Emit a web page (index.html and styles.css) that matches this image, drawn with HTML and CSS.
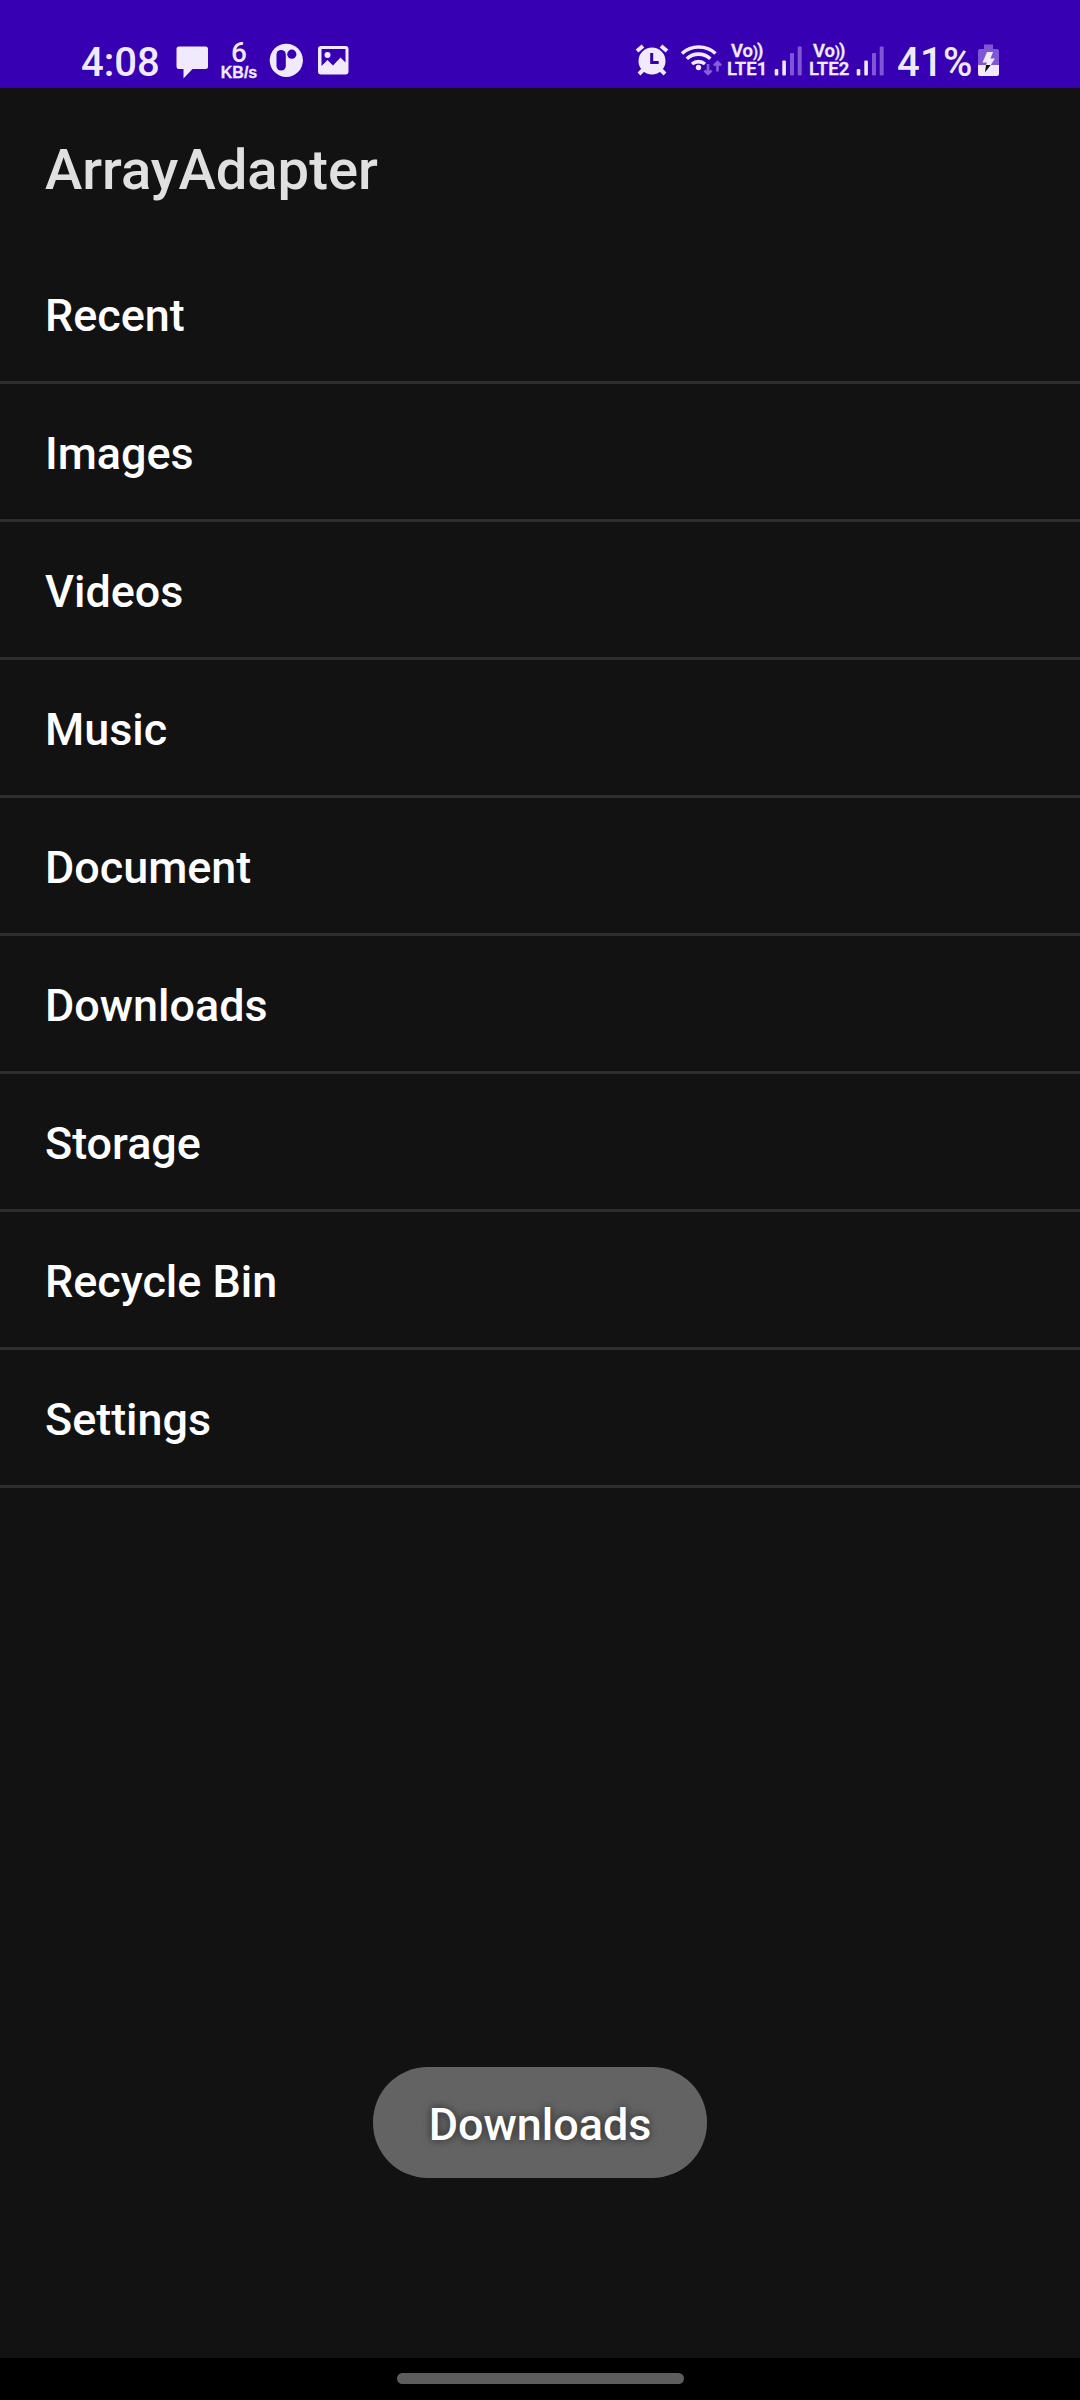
FILE: index.html
```html
<!DOCTYPE html>
<html lang="en">
<head>
<meta charset="utf-8">
<title>ArrayAdapter</title>
<link rel="stylesheet" href="styles.css">
</head>
<body>
<div class="screen">
  <header class="status">
    <div class="status-side">
      <span class="clock">4:08</span>
      <svg class="icon" width="46" height="88" viewBox="170 0 46 88"><path d="M179 46.500h26.500a2.500 2.500 0 0 1 2.500 2.500v17.500a2.500 2.500 0 0 1-2.500 2.500H192.500L183.500 78.500V69H179a2.500 2.500 0 0 1-2.500-2.500V49a2.500 2.500 0 0 1 2.500-2.500z"/></svg>
      <div class="speed"><span class="speed-value">6</span><span class="speed-unit">KB/s</span></div>
      <svg class="icon" width="100" height="88" viewBox="262 0 100 88">
        <circle cx="286.300" cy="60.300" r="16.600"/>
        <rect class="cut" x="276.500" y="50" width="9.300" height="20.500" rx="4.600"/>
        <circle class="cut" cx="291.800" cy="54.200" r="4.600"/>
        <path fill-rule="evenodd" d="M321 46h24.500a3 3 0 0 1 3 3v22.500a3 3 0 0 1-3 3H321a3 3 0 0 1-3-3V49a3 3 0 0 1 3-3zM321.500 49v17l6-6 5.500 5.500 7.500-8 5 5V49z"/>
        <circle cx="327.500" cy="55" r="3"/>
      </svg>
    </div>
    <div class="status-side">
      <svg class="icon" width="96" height="88" viewBox="630 0 96 88">
        <circle cx="652" cy="61" r="13.500"/>
        <path class="line" stroke-width="4" d="M637 51l6-5M661 46l6 5M643 70l-4 4M661 70l4 4"/>
        <path class="cut-line" stroke-width="3" d="M651.700 53v9.500h7"/>
        <path class="line" stroke-width="3.600" d="M682 53.500a25 25 0 0 1 33.500 0M686.800 58.800a17 17 0 0 1 23.500 0M692 64a10 10 0 0 1 13 0"/>
        <circle cx="698.500" cy="67.500" r="2.700"/>
        <path class="line dim" stroke-width="2.600" d="M708 64v9.500M704.500 70.500l3.500 3.500 3.500-3.500M717.500 71.500V62.500M714 65.500l3.500-3.500 3.500 3.500"/>
      </svg>
      <div class="network"><span class="volte">Vo<b>)</b><b class="wide">)</b></span><span>LTE1</span></div>
      <svg class="icon bars" width="30" height="88" viewBox="773 0 30 88"><rect x="774.700" y="69" width="3.600" height="6.500" rx="1"/><rect x="782.300" y="60.500" width="3.600" height="15" rx="1"/><rect class="faint" x="790" y="53" width="4" height="22.500" rx="1"/><rect class="faint" x="797.700" y="46.500" width="4" height="29" rx="1"/></svg>
      <div class="network second"><span class="volte">Vo<b>)</b><b class="wide">)</b></span><span>LTE2</span></div>
      <svg class="icon bars" width="30" height="88" viewBox="773 0 30 88"><rect x="774.700" y="69" width="3.600" height="6.500" rx="1"/><rect x="782.300" y="60.500" width="3.600" height="15" rx="1"/><rect class="faint" x="790" y="53" width="4" height="22.500" rx="1"/><rect class="faint" x="797.700" y="46.500" width="4" height="29" rx="1"/></svg>
      <span class="percent">41%</span>
      <svg class="icon" width="24" height="88" viewBox="976 0 24 88">
        <path class="faint" d="M984 49v-4.500h9V49h4a2 2 0 0 1 2 2v14H978V51a2 2 0 0 1 2-2z"/>
        <path d="M978 65h21v9a2 2 0 0 1-2 2h-17a2 2 0 0 1-2-2z"/>
        <path d="M987 52h6l-2.500 6.500h4.500L990.700 65H986l1-2.500h-4.500z"/>
        <path class="ink" d="M986 65h4.700L985 72.500z"/>
      </svg>
    </div>
  </header>
  <h1 class="title">ArrayAdapter</h1>
  <ul class="list">
    <li>Recent</li>
    <li>Images</li>
    <li>Videos</li>
    <li>Music</li>
    <li>Document</li>
    <li>Downloads</li>
    <li>Storage</li>
    <li>Recycle Bin</li>
    <li>Settings</li>
  </ul>
  <div class="toast">Downloads</div>
  <footer class="nav"><div class="handle"></div></footer>
</div>
</body>
</html>
```
FILE: styles.css
```css
* { box-sizing: border-box; }
body { margin: 0; background: #121212; font-family: Roboto, sans-serif; font-weight: 500; }
.screen { width: 1080px; height: 2400px; display: flex; flex-direction: column; background: #121212; }
.status { height: 88px; flex: none; display: flex; justify-content: space-between; padding: 0 80px 0 81px; background: #3700b3; color: #f1eafc; }
.status-side { display: flex; align-items: flex-start; }
.icon { display: block; flex: none; fill: #f1eafc; }
.line { fill: none; stroke: #f1eafc; }
.cut { fill: #3700b3; }
.cut-line { fill: none; stroke: #3700b3; }
.dim { stroke: #865fd8; }
.faint { fill: #7f56d3; }
.ink { fill: #121212; }
.clock { width: 89px; font-size: 40px; line-height: 48px; padding-top: 39px; white-space: nowrap; }
.speed { width: 46px; display: flex; flex-direction: column; align-items: center; padding-top: 41px; }
.speed-value { font-size: 28px; line-height: 24px; }
.speed-unit { font: bold 16px/15px "Liberation Sans", sans-serif; -webkit-text-stroke: .3px #f1eafc; }
.network { width: 47px; display: flex; flex-direction: column; padding: 42px 0 0 1px; font-size: 18.5px; font-weight: 600; line-height: 18px; white-space: nowrap; -webkit-text-stroke: .3px #f1eafc; }
.volte { padding-left: 4px; height: 18px; }
.volte b { font-size: 14px; font-weight: 700; letter-spacing: -1px; }
.volte .wide { font-size: 18px; }
.second { margin-left: 5px; }
.percent { width: 91px; font-size: 40px; line-height: 48px; padding: 39px 0 0 12px; letter-spacing: .3px; }
.title { height: 158px; flex: none; margin: 0; padding: 48px 45px 0; font-size: 56.2px; line-height: 68px; font-weight: 500; color: #e0e0e0; }
.list { list-style: none; margin: 0; padding: 0; color: #fff; }
.list li { height: 138px; padding: 1px 0 0 45px; border-bottom: 3px solid #2e2e2e; font-size: 44.9px; line-height: 138px; }
.toast { align-self: center; width: 334px; height: 111px; margin: auto 0 180px; border-radius: 55px; background: #636363; color: #fff; font-size: 44.9px; line-height: 116px; text-align: center; text-shadow: 0 0 8px rgba(0, 0, 0, .6); }
.nav { height: 42px; flex: none; display: flex; justify-content: center; padding-top: 15px; background: #000; }
.handle { width: 287px; height: 11px; border-radius: 6px; background: #5d5d5d; }
```
